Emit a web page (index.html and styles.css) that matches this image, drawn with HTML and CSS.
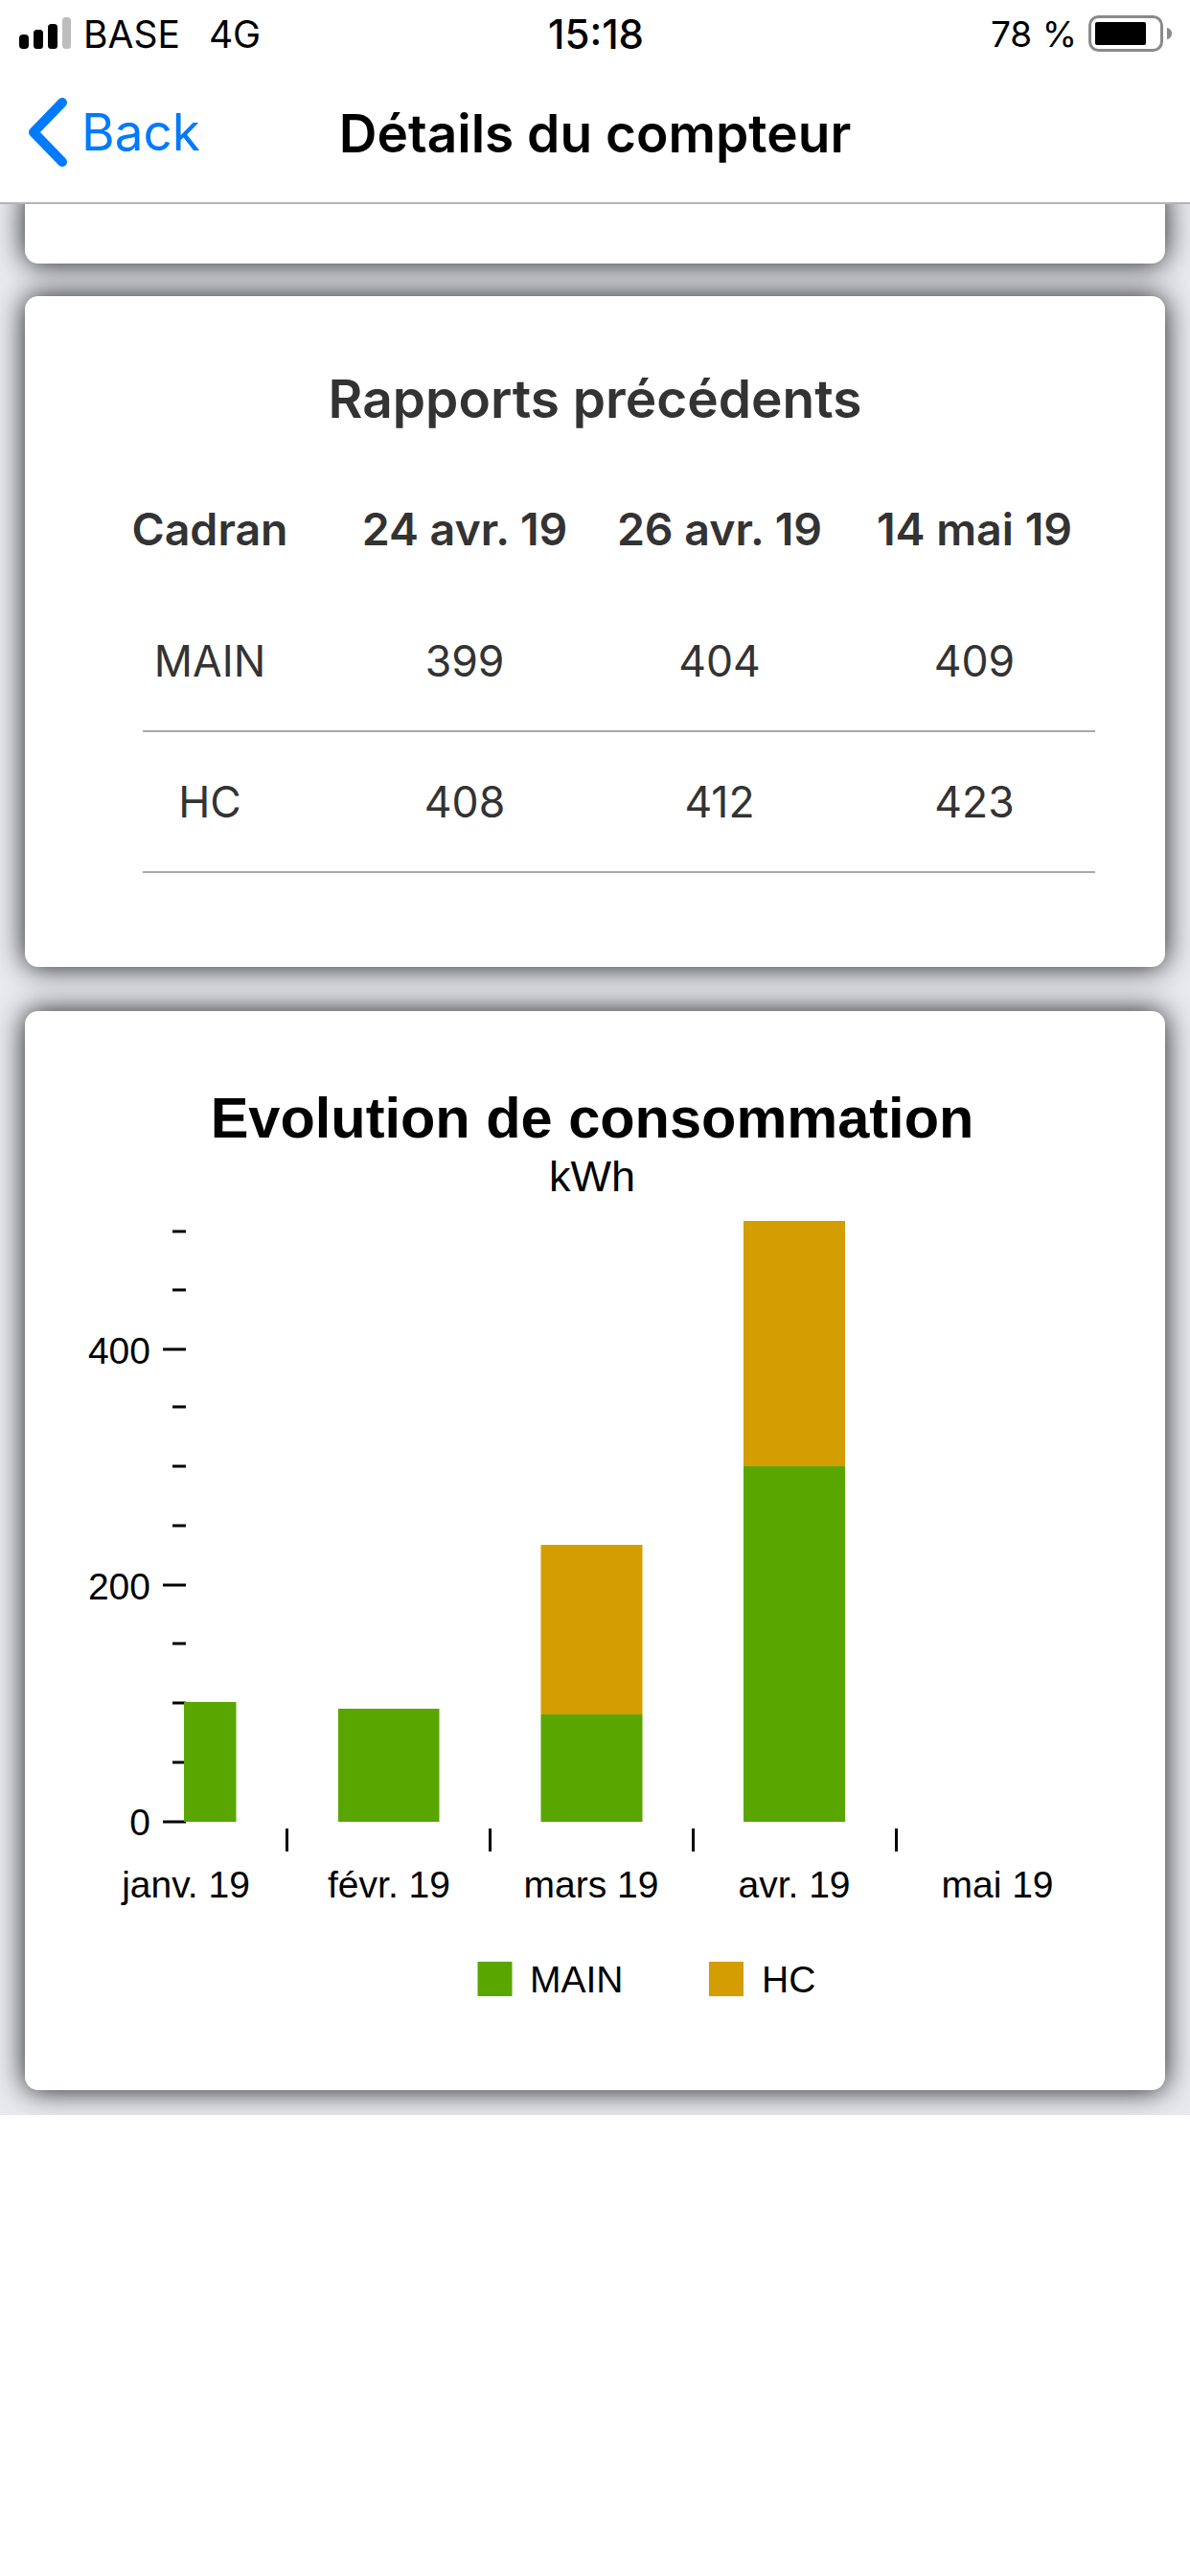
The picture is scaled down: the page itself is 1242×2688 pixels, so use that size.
FILE: index.html
```html
<!DOCTYPE html>
<html lang="fr">
<head>
<meta charset="utf-8">
<title>Détails du compteur</title>
<link rel="stylesheet" href="styles.css">
</head>
<body>
<div class="screen">
  <header class="top">
    <div class="status">
      <div class="status-left">
        <svg class="signal" width="56" height="34" viewBox="0 0 56 34">
          <rect x="0" y="18" width="10" height="15" rx="4"/>
          <rect x="15" y="13" width="10" height="20" rx="3.5"/>
          <rect x="30" y="7" width="10" height="26" rx="3.5"/>
          <rect class="off" x="45" y="0" width="9" height="33" rx="3.5"/>
        </svg>
        <span class="carrier">BASE</span>
        <span class="net">4G</span>
      </div>
      <div class="time">15:18</div>
      <div class="status-right">
        <span class="pct">78 %</span>
        <svg class="battery" width="90" height="40" viewBox="0 0 90 40">
          <rect x="1.5" y="1.5" width="75" height="35" rx="9" fill="none" stroke="#8a8a8a" stroke-width="3"/>
          <rect x="7" y="7" width="53" height="24" rx="2" fill="#000"/>
          <path d="M82 13c3 .5 5 3 5 6s-2 5.500-5 6z" fill="#8a8a8a"/>
        </svg>
      </div>
    </div>
    <nav class="nav">
      <a class="back">
        <svg width="50" height="76" viewBox="0 0 50 76"><path d="M40 7 10 38l30 31" fill="none" stroke="#007aff" stroke-width="10" stroke-linecap="round" stroke-linejoin="round"/></svg>
        <span>Back</span>
      </a>
      <h1 class="title">Détails du compteur</h1>
    </nav>
  </header>

  <main class="scroll">
    <section class="card card-clipped"></section>

    <section class="card card-table">
      <h2 class="card-title">Rapports précédents</h2>
      <div class="cols head">
        <div>Cadran</div><div>24 avr. 19</div><div>26 avr. 19</div><div>14 mai 19</div>
      </div>
      <div class="cols row">
        <div>MAIN</div><div>399</div><div>404</div><div>409</div>
      </div>
      <div class="rule"></div>
      <div class="cols row">
        <div>HC</div><div>408</div><div>412</div><div>423</div>
      </div>
      <div class="rule"></div>
    </section>

    <section class="card card-chart">
      <svg class="chart" width="1190" height="1126" viewBox="26 1055 1190 1126">
        <text class="c-title" x="618" y="1187">Evolution de consommation</text>
        <text class="c-sub" x="618" y="1243">kWh</text>

        <g class="ticks">
          <path d="M180 1285h14M180 1346h14M170 1408h24M180 1468h14M180 1530h14M180 1592h14M170 1654h24M180 1715h14M180 1777h14M180 1839h14M170 1901h24"/>
          <path d="M299.500 1908v24M511.500 1908v24M723.500 1908v24M935.500 1908v24"/>
        </g>

        <text class="c-axis end" x="157" y="1423">400</text>
        <text class="c-axis end" x="157" y="1669">200</text>
        <text class="c-axis end" x="157" y="1915">0</text>

        <g class="main">
          <rect x="192" y="1776" width="54.500" height="125"/>
          <rect x="353" y="1783" width="105.500" height="118"/>
          <rect x="564.500" y="1789" width="106" height="112"/>
          <rect x="776" y="1530" width="106" height="371"/>
        </g>
        <g class="hc">
          <rect x="564.500" y="1612" width="106" height="177"/>
          <rect x="776" y="1274" width="106" height="256"/>
        </g>

        <text class="c-axis" x="194" y="1980">janv. 19</text>
        <text class="c-axis" x="406" y="1980">févr. 19</text>
        <text class="c-axis" x="617" y="1980">mars 19</text>
        <text class="c-axis" x="829" y="1980">avr. 19</text>
        <text class="c-axis" x="1041" y="1980">mai 19</text>

        <rect class="main" x="498.500" y="2047" width="36" height="36"/>
        <text class="c-axis start" x="553" y="2079">MAIN</text>
        <rect class="hc" x="740" y="2047" width="36" height="36"/>
        <text class="c-axis start" x="795" y="2079">HC</text>
      </svg>
    </section>
  </main>
</div>
</body>
</html>
```
FILE: styles.css
```css
* { box-sizing: border-box; }
html, body { margin: 0; padding: 0; background: #fff; }
.screen { width: 1242px; height: 2688px; display: flex; flex-direction: column; overflow: hidden; background: #fff; }

.top { position: relative; z-index: 2; height: 213px; background: #fff; border-bottom: 2px solid #b4b4b6; flex: none; }
.status { height: 70px; display: grid; grid-template-columns: 1fr auto 1fr; align-items: center; padding: 0 18px 0 20px; font-family: Inter, "Liberation Sans", sans-serif; font-size: 37px; color: #000; }
.status-left { display: flex; align-items: center; height: 70px; font-size: 39px; }
.signal { flex: none; margin-right: 11px; }
.signal rect { fill: #000; }
.signal .off { fill: #bdbdbd; }
.carrier { margin-right: 30px; }
.time { font-size: 42px; font-weight: 500; }
.status-right { display: flex; justify-content: flex-end; align-items: center; }
.battery { flex: none; margin-left: 12px; margin-right: -2px; margin-top: 2px; }

.nav { height: 141px; display: flex; align-items: center; justify-content: center; position: relative; font-family: Inter, "Liberation Sans", sans-serif; padding-bottom: 4px; }
.back { position: absolute; left: 25px; top: 30px; display: flex; align-items: center; gap: 10px; color: #007aff; font-size: 53px; line-height: 76px; }
.title { margin: 0; font-size: 55px; font-weight: 600; color: #000; line-height: 76px; }

.scroll { height: 1994px; flex: none; background: #e9eaef; overflow: hidden; padding: 0 26px; }
.card { background: #fff; border-radius: 14px; box-shadow: 0 0 30px rgba(0, 0, 0, .9); }
.card-clipped { height: 80px; margin-top: -18px; }
.card-table { height: 700px; margin-top: 34px; font-family: Inter, "Liberation Sans", sans-serif; color: #333; padding-top: 77px; }
.card-chart { height: 1126px; margin-top: 46px; overflow: hidden; }
.card-title { margin: 0 0 76px; font-size: 55px; line-height: 60px; font-weight: 600; text-align: center; }

.cols { display: grid; grid-template-columns: repeat(4, 266px); margin-left: 60px; text-align: center; font-size: 45px; line-height: 60px; }
.head { height: 60px; margin-bottom: 78px; font-size: 46.500px; font-weight: 600; }
.row { height: 60px; font-size: 44.500px; font-weight: 400; margin-bottom: 42px; }
.rule { height: 2px; background: #a9a9a9; margin: 0 73px 43px 123px; }

.chart { display: block; font-family: "Liberation Sans", Arial, sans-serif; fill: #000; }
.c-title { font-size: 59.500px; font-weight: 700; text-anchor: middle; }
.c-sub { font-size: 45px; text-anchor: middle; }
.c-axis { font-size: 39px; text-anchor: middle; }
.c-axis.end { text-anchor: end; }
.c-axis.start { text-anchor: start; }
.ticks path { fill: none; stroke: #000; stroke-width: 3; }
.main, .main rect { fill: #59a600; }
.hc, .hc rect { fill: #d49d00; }
```
